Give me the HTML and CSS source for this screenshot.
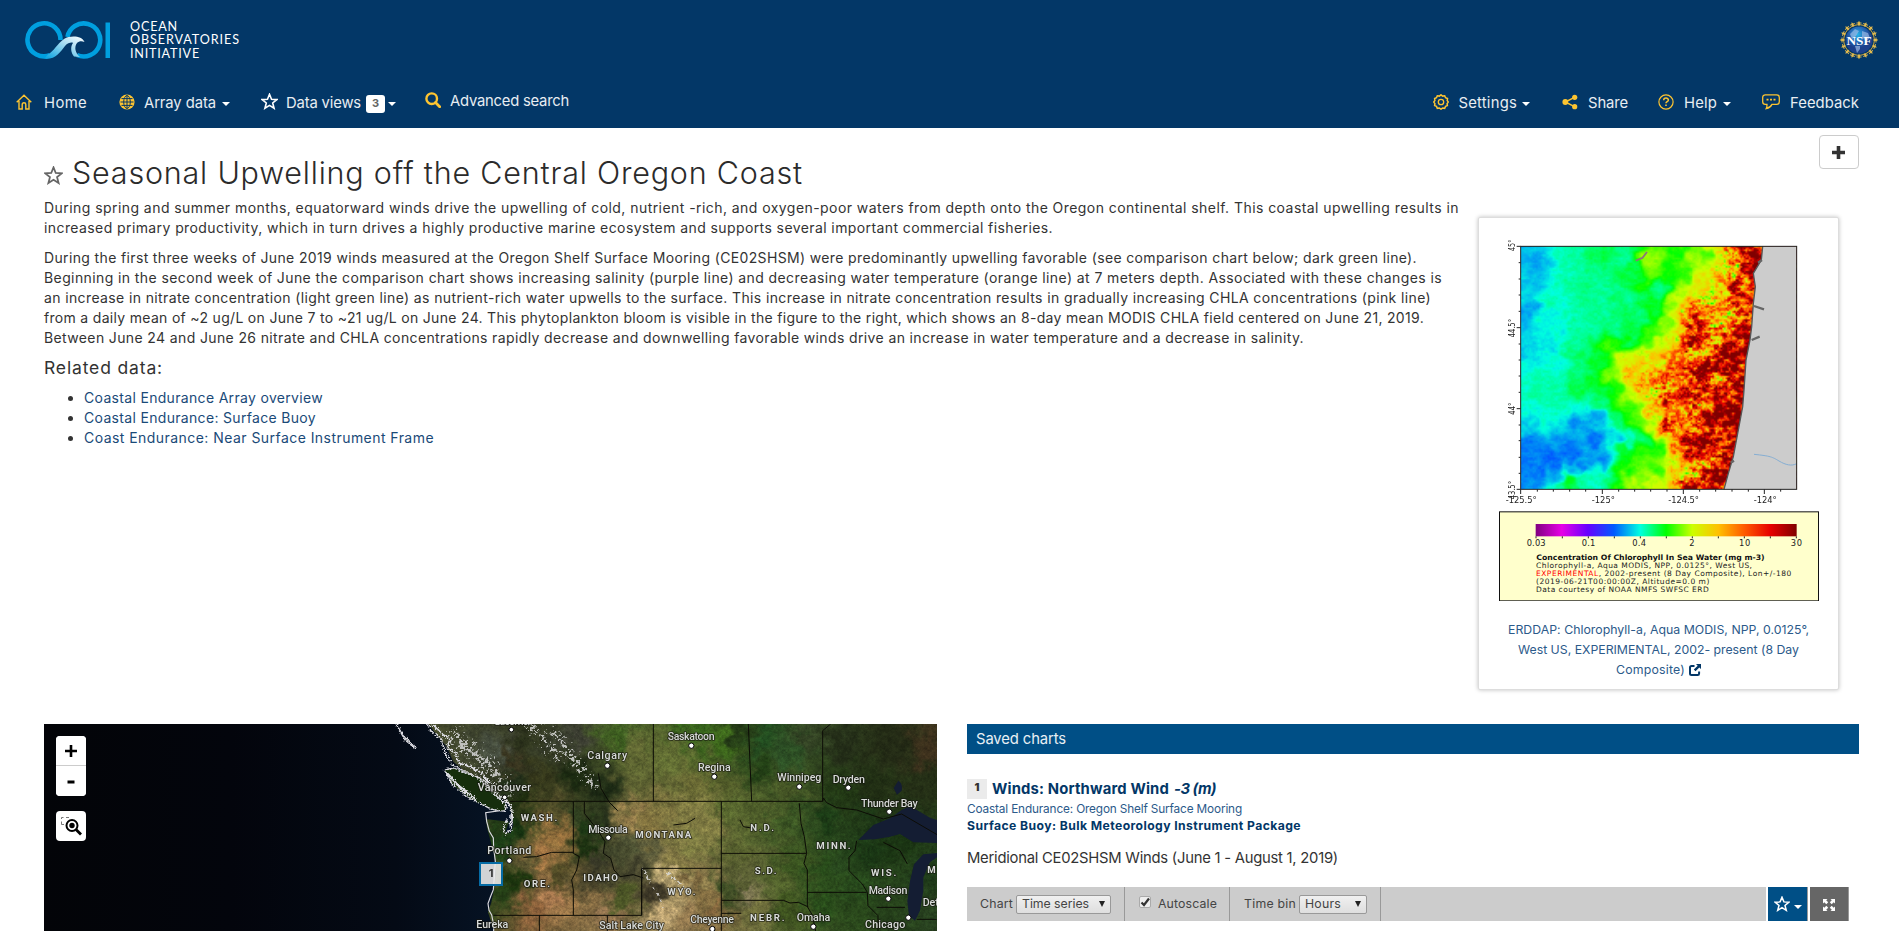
FILE: index.html
```html
<!DOCTYPE html>
<html lang="en">
<head>
<meta charset="utf-8">
<title>Seasonal Upwelling off the Central Oregon Coast</title>
<link rel="stylesheet" href="styles.css">
</head>
<body>
<svg class="defs" width="0" height="0">
  <symbol id="star" viewBox="0 0 16 16"><path d="M8 1.2l1.9 4.7 5 .3-3.9 3.2 1.3 4.9L8 11.6l-4.3 2.7L5 9.4 1.1 6.2l5-.3z" fill="none" stroke="currentColor" stroke-width="1.5"/></symbol>
</svg>

<header class="header">
  <div class="brand">
    <div class="brand-left">
      <svg class="ooi" width="87" height="40" viewBox="24 20 87 40">
        <defs><linearGradient id="wave" x1="0" x2="1" y1="1" y2="0"><stop offset="0" stop-color="#009fdf"/><stop offset=".6" stop-color="#a9dcf1"/><stop offset="1" stop-color="#fff"/></linearGradient></defs>
        <path d="M60.500 40A16.500 16.500 0 1 0 50 55.200" fill="none" stroke="#009fdf" stroke-width="4.600"/>
        <path d="M67.500 37A16.500 16.500 0 1 1 77 55" fill="none" stroke="#009fdf" stroke-width="4.600"/>
        <path d="M44 58.800C56 60 60 52 65 46c3-3.500 7-4 8-3-3 4-2 10 1 13.500l6 .5c-5-4-6-10-3-14 2-2 5-2 7.500-1C82 36 71 35 64 39c-7 5-10 12-16 15.500z" fill="url(#wave)"/>
        <path d="M105.500 22.500h4.500v35.500h-4.500z" fill="#009fdf"/>
      </svg>
      <div class="brand-name"><span data-w="48">OCEAN</span><span data-w="110">OBSERVATORIES</span><span data-w="70">INITIATIVE</span></div>
    </div>
    <svg class="nsf" width="40" height="40" viewBox="-20 -20 40 40">
      <defs><radialGradient id="globe" cx=".45" cy=".3"><stop offset="0" stop-color="#25b4ea"/><stop offset=".55" stop-color="#2468b5"/><stop offset="1" stop-color="#1c3f8a"/></radialGradient></defs>
      <circle r="15.500" fill="none" stroke="#d1a73c" stroke-width="1"/>
      <g id="nsf-rays" fill="#e0b94f"></g>
      <circle r="13.500" fill="url(#globe)"/>
      <path d="M-9-6l5-5 4 2-3 5-4 3zM3-9l6 2 2 5-4 3-4-4zM-4 6l5 0 0 3-3 4z" fill="#9bb9e4" opacity=".7"/>
      <text y="4.500" text-anchor="middle" textLength="25" lengthAdjust="spacingAndGlyphs" class="nsf-text">NSF</text>
    </svg>
  </div>
  <nav class="nav">
    <div class="nav-side">
      <a class="item home"><svg width="16" height="16" viewBox="0 0 16 16"><path d="M.7 8.300L8 1.300l7.300 7M3 7v8h3.200v-4.500a1.800 1.800 0 0 1 3.600 0V15H13V7" fill="none" stroke="#fdc431" stroke-width="1.400"/></svg><span data-w="43">Home</span></a>
      <a class="item array"><svg width="16" height="16" viewBox="0 0 16 16"><circle cx="8" cy="8" r="7.600" fill="#fdc431"/><g fill="none" stroke="#033767" stroke-width="1"><ellipse cx="8" cy="8" rx="3.300" ry="6.400"/><path d="M1.500 8h13M8 1.300v13.400M2.500 4.600h11M2.500 11.400h11"/></g></svg><span data-w="72">Array data</span><i class="caret"></i></a>
      <a class="item views"><svg width="17" height="17"><use href="#star"/></svg><span data-w="75">Data views</span><b class="count">3</b><i class="caret"></i></a>
      <a class="item search"><svg width="16" height="16" viewBox="0 0 16 16"><circle cx="6.700" cy="6.700" r="5.300" fill="none" stroke="#fdc431" stroke-width="2.400"/><path d="M10.500 10.500l4.200 4.200" stroke="#fdc431" stroke-width="2.800" stroke-linecap="round"/></svg><span data-w="119">Advanced search</span></a>
    </div>
    <div class="nav-side">
      <a class="item"><svg width="16" height="16" viewBox="0 0 16 16"><path d="M8 .8l1.700 1.300 2-.3.800 1.900 2 .8-.3 2L15.300 8l-1.200 1.600.3 2-1.900.8-.8 1.900-2-.3L8 15.200 6.300 14l-2 .3-.8-1.900-1.900-.8.3-2L.7 8l1.200-1.500-.3-2 1.900-.8.8-1.900 2 .3z" fill="none" stroke="#fdc431" stroke-width="1.500"/><circle cx="8" cy="8" r="2.700" fill="none" stroke="#fdc431" stroke-width="1.300"/></svg><span data-w="58.500">Settings</span><i class="caret"></i></a>
      <a class="item share"><svg width="16" height="16" viewBox="0 0 16 16"><g fill="#fdc431"><circle cx="3.300" cy="8" r="2.900"/><circle cx="12.700" cy="3.300" r="2.600"/><circle cx="12.700" cy="12.700" r="2.600"/></g><path d="M12.500 3.300L3.300 8l9.200 4.700" fill="none" stroke="#fdc431" stroke-width="1.500"/></svg><span data-w="40">Share</span></a>
      <a class="item help"><svg width="16" height="16" viewBox="0 0 16 16"><circle cx="8" cy="8" r="7.100" fill="none" stroke="#fdc431" stroke-width="1.200"/><path d="M5.700 6.200C5.700 3.300 10.400 3.400 10.400 6c0 1.700-2.400 1.700-2.400 3.300" fill="none" stroke="#fdc431" stroke-width="1.500"/><path d="M7.200 10.500h1.600v1.500H7.200z" fill="#fdc431"/></svg><span data-w="33">Help</span><i class="caret"></i></a>
      <a class="item feedback"><svg width="18" height="16" viewBox="0 0 18 16"><path d="M3.300.8h11.400a2.600 2.600 0 0 1 2.600 2.600v4.400a2.600 2.600 0 0 1-2.600 2.600H10c-1 2-3 3.600-5.800 4.200.7-1.300.9-2.500.8-4.200H3.300A2.600 2.600 0 0 1 .7 7.800V3.400A2.600 2.600 0 0 1 3.300.8z" fill="none" stroke="#fdc431" stroke-width="1.300"/><path d="M4.500 4.800h2v1.700h-2zM8 4.800h2v1.700H8zM11.500 4.800h2v1.700h-2z" fill="#fdc431"/></svg><span data-w="69">Feedback</span></a>
    </div>
  </nav>
</header>

<div class="actions"><button class="add" aria-label="Add"><svg width="13" height="13" viewBox="0 0 13 13"><path d="M4.700 0h3.600v4.700H13v3.600H8.300V13H4.700V8.300H0V4.700h4.700z" fill="#333"/></svg></button></div>

<main class="page">
  <section class="intro">
    <article class="story">
      <h1><svg width="19" height="19"><use href="#star"/></svg><span data-w="731">Seasonal Upwelling off the Central Oregon Coast</span></h1>
      <p><span data-w="1415">During spring and summer months, equatorward winds drive the upwelling of cold, nutrient -rich, and oxygen-poor waters from depth onto the Oregon continental shelf. This coastal upwelling results in</span><span data-w="1009">increased primary productivity, which in turn drives a highly productive marine ecosystem and supports several important commercial fisheries.</span></p>
      <p><span data-w="1373">During the first three weeks of June 2019 winds measured at the Oregon Shelf Surface Mooring (CE02SHSM) were predominantly upwelling favorable (see comparison chart below; dark green line).</span><span data-w="1398">Beginning in the second week of June the comparison chart shows increasing salinity (purple line) and decreasing water temperature (orange line) at 7 meters depth. Associated with these changes is</span><span data-w="1387">an increase in nitrate concentration (light green line) as nutrient-rich water upwells to the surface. This increase in nitrate concentration results in gradually increasing CHLA concentrations (pink line)</span><span data-w="1380">from a daily mean of ~2 ug/L on June 7 to ~21 ug/L on June 24. This phytoplankton bloom is visible in the figure to the right, which shows an 8-day mean MODIS CHLA field centered on June 21, 2019.</span><span data-w="1260">Between June 24 and June 26 nitrate and CHLA concentrations rapidly decrease and downwelling favorable winds drive an increase in water temperature and a decrease in salinity.</span></p>
      <h2><span data-w="119">Related data:</span></h2>
      <ul>
        <li><a data-w="239">Coastal Endurance Array overview</a></li>
        <li><a data-w="232">Coastal Endurance: Surface Buoy</a></li>
        <li><a data-w="350">Coast Endurance: Near Surface Instrument Frame</a></li>
      </ul>
    </article>

    <figure class="card">
      <div class="plot">
        <canvas id="chlorophyll" width="166" height="146"></canvas>
        <svg class="plot-axes" width="360" height="390" viewBox="27 24 1080 1170">
          <path d="M878 109L874 150L850 190L856 230L850 280L845 350L840 390L828 450L822 540L818 590L805 660L790 740L775 790L762 838H980V109z" fill="#ccc"/>
          <path d="M878 109L874 150L850 190L856 230L850 280L845 350L840 390L828 450L822 540L818 590L805 660L790 740L775 790L762 838" fill="none" stroke="#555" stroke-width="4"/>
          <path d="M852 288l30 10M845 390l24-10M864 158l12-8M782 758l10-6" stroke="#666" stroke-width="7"/>
          <path d="M852 733c50 5 55 8 75 20s38 16 53 8" fill="none" stroke="#85aed3" stroke-width="3"/>
          <path d="M497 152l20-8 14-18" fill="none" stroke="#887a78" stroke-width="6"/>
          <rect x="152" y="109" width="828" height="729" fill="none" stroke="#222" stroke-width="3"/>
          <path d="M140 109h12M140 353h12M140 596h12M140 838h12M146 158h6M146 207h6M146 255h6M146 304h6M146 402h6M146 450h6M146 498h6M146 547h6M146 645h6M146 692h6M146 742h6M146 790h6M152 838v14M397 838v14M640 838v14M883 838v14M202 838v7M250 838v7M299 838v7M347 838v7M446 838v7M494 838v7M542 838v7M591 838v7M689 838v7M737 838v7M786 838v7M835 838v7M932 838v7" stroke="#222" stroke-width="3"/>
          <g class="tick">
            <text x="107" y="879" textLength="93">-125.5°</text><text x="365" y="879" textLength="70">-125°</text><text x="595" y="879" textLength="92">-124.5°</text><text x="851" y="879" textLength="69">-124°</text>
            <text transform="translate(134 123) rotate(-90)" textLength="34" lengthAdjust="spacingAndGlyphs">45°</text><text transform="translate(134 382) rotate(-90)" textLength="55" lengthAdjust="spacingAndGlyphs">44.5°</text><text transform="translate(134 614) rotate(-90)" textLength="36" lengthAdjust="spacingAndGlyphs">44°</text><text transform="translate(134 868) rotate(-90)" textLength="55" lengthAdjust="spacingAndGlyphs">43.5°</text>
          </g>
          <defs><linearGradient id="scale"><stop offset="0" stop-color="#800080"/><stop offset=".1" stop-color="#e600e6"/><stop offset=".2" stop-color="#6600ff"/><stop offset=".3" stop-color="#005aff"/><stop offset=".4" stop-color="#00ffe0"/><stop offset=".5" stop-color="#0f0"/><stop offset=".6" stop-color="#cf0"/><stop offset=".7" stop-color="#ffc000"/><stop offset=".8" stop-color="#ff5a00"/><stop offset=".9" stop-color="#e60000"/><stop offset="1" stop-color="#800000"/></linearGradient></defs>
          <rect x="88.500" y="905.500" width="957" height="267" fill="#ffc" stroke="#111" stroke-width="3"/>
          <rect x="197" y="942" width="783" height="37" fill="url(#scale)"/>
          <path d="M198 979v6M277 979v6M355 979v6M433 979v6M511 979v6M589 979v6M667 979v6M745 979v6M823 979v6M901 979v6M979 979v6" stroke="#222" stroke-width="3"/>
          <g class="tick"><text x="170" y="1009" textLength="57">0.03</text><text x="335" y="1009" textLength="41">0.1</text><text x="487" y="1009" textLength="41">0.4</text><text x="658" y="1009">2</text><text x="807" y="1009" textLength="34">10</text><text x="962" y="1009" textLength="34">30</text></g>
          <g class="legend">
            <text class="legend-title" x="199" y="1050" textLength="685" lengthAdjust="spacingAndGlyphs">Concentration Of Chlorophyll In Sea Water (mg m-3)</text>
            <text x="198" y="1074" textLength="648">Chlorophyll-a, Aqua MODIS, NPP, 0.0125°, West US,</text>
            <text x="198" y="1098" textLength="766"><tspan fill="#f00">EXPERIMENTAL</tspan>, 2002-present (8 Day Composite), Lon+/-180</text>
            <text x="198" y="1122" textLength="520">(2019-06-21T00:00:00Z, Altitude=0.0 m)</text>
            <text x="198" y="1146" textLength="518">Data courtesy of NOAA NMFS SWFSC ERD</text>
          </g>
        </svg>
      </div>
      <figcaption><span data-w="301">ERDDAP: Chlorophyll-a, Aqua MODIS, NPP, 0.0125°,</span><span data-w="281">West US, EXPERIMENTAL, 2002- present (8 Day</span><span class="last"><span data-w="69">Composite)</span><svg width="12" height="12" viewBox="0 0 12 12"><path d="M5.500 2H2.500Q1 2 1 3.500v6Q1 11 2.500 11h6.200q1.400 0 1.400-1.500V7.500" fill="none" stroke="#033767" stroke-width="2"/><path d="M7 0h5v5L10.300 3.500 6.500 7.300 4.800 5.600l3.900-3.900z" fill="#033767"/></svg></span></figcaption>
    </figure>
  </section>

  <section class="panels">
    <div class="map">
      <canvas id="terrain" width="893" height="207"></canvas>
      <svg class="map-lines" width="893" height="207" viewBox="0 0 893 207">
        <defs>
          <linearGradient id="sea"><stop offset="0" stop-color="#030408"/><stop offset=".4" stop-color="#03050c"/><stop offset=".75" stop-color="#040a15"/><stop offset="1" stop-color="#061426"/></linearGradient>
          <filter id="rough" x="-10%" y="-10%" width="120%" height="120%"><feTurbulence type="fractalNoise" baseFrequency=".2" numOctaves="3" seed="4"/><feDisplacementMap in="SourceGraphic" scale="14" xChannelSelector="R" yChannelSelector="G"/></filter>
        </defs>
        <g transform="translate(341 -4) scale(.33333)">
          <path d="M-1030 0H120l40 50 25 30 20 45 35 30 55 30 35 40 45 30 4 30 6 30-8 25-15-5 10-30-70-8 5 30 12 45 10 35 4 50-6 50-8 40-10 30 17 50 3 40H-1030z" fill="url(#sea)"/>
          <g filter="url(#rough)" fill="none" stroke="#dddde3" stroke-width="4" stroke-linejoin="round">
            <path d="M120 0l20 35 28 20 15 50 20 30 35 18 55 25 30 30 35 30 20 20 5 30-5 40-18 15-5-20 12-25"/>
            <path d="M135 5l40 40 20 10-8 30 25 15 10 30 35 10 35 20 15 25 20 5M360 230l20 40-4 50" stroke-width="5"/>
            <path d="M30 5l20 35 20 20 20 24-30-24-25-45z" fill="#888"/>
            <path d="M178 150l28-6 76 30 40 42 42 40-4 18-40-6-70-36-46-36z" fill="#182e0e"/>
            <path d="M185 158l36 40 50 38" stroke-width="7"/>
          </g>
          <path d="M345 272l-43 6 3 26 8 30 12 20 1 30 5 40-3 45-3 40-8 20-8 22 3 20 8 14 6 30v20" fill="none" stroke="#d8d8de" stroke-width="3.500"/>
        </g>
        <g transform="translate(446 -14) scale(.33333)">
          <g fill="#141d33"><path d="M1105 390l45-45 50-20 35-25 25-12 60 35 30 10v66l-80-2-40-25-30 8-45 8zM1350 428l-50 5-28 30-12 50-8 60 5 45 18 14 15-30 10-60v-40l20-45 30-22zM1225 212q14 8 10 30l-14 12-10-20z"/></g>
          <g class="borders">
            <path d="M490 42v232M775 42l10 232M1022 42l-24 20v212M60 274H998l2-10 10 14 30 15 60 7 80 27 55-15 120 70M250 274v156l18 10-8 40-15 30 5 30v76M10 616h445V475h239M100 442l40-2 45-13h65M283 274v36l40 50 22 35-5 35 22 15 10 35 18 20 40-6 30 10M455 475v141M694 274v389M694 430h256M694 571h186l20 8 25-2 30 14M928 280l5 60 10 40 7 50-8 30 10 20v110l15 25 10 48M952 547h178M1100 392l-5 30-18 20v40l40 40 15 25 2 40 30 30v46M1160 592h85M148 616v50M352 616v50M325 190l8 45 25 42 25 25M1180 397l50 25 22 40M694 610h60M1280 628h60M550 345l40-5 25-15M750 330l10 20 30 5"/>
          </g>
          <g fill="#fff" stroke="#000" stroke-width="3"><circle cx="64" cy="59" r="7"/><circle cx="352" cy="167" r="8"/><circle cx="604" cy="107" r="8"/><circle cx="673" cy="200" r="8"/><circle cx="928" cy="230" r="8"/><circle cx="1075" cy="233" r="8"/><circle cx="1198" cy="305" r="8"/><circle cx="355" cy="383" r="8"/><circle cx="58" cy="452" r="8"/><circle cx="1195" cy="566" r="8"/><circle cx="1255" cy="623" r="8"/><circle cx="970" cy="650" r="8"/><circle cx="667" cy="657" r="8"/><circle cx="44" cy="262" r="7"/></g>
          <g class="city">
            <text x="14" y="46" textLength="110">Lacomer</text><text x="292" y="147" textLength="120">Calgary</text><text x="533" y="91" textLength="141">Saskatoon</text><text x="624" y="182" textLength="98">Regina</text><text x="862" y="213" textLength="132">Winnipeg</text><text x="1028" y="218" textLength="97">Dryden</text><text x="1113" y="290" textLength="170">Thunder Bay</text><text x="-37" y="243" textLength="160">Vancouver</text><text x="295" y="368" textLength="118">Missoula</text><text x="-8" y="431" textLength="132">Portland</text><text x="1136" y="551" textLength="116">Madison</text><text x="1125" y="654" textLength="121">Chicago</text><text x="920" y="634" textLength="101">Omaha</text><text x="601" y="640" textLength="131">Cheyenne</text><text x="328" y="656" textLength="194">Salt Lake City</text><text x="-41" y="655" textLength="96">Eureka</text><text x="1298" y="588">Det</text>
          </g>
          <g class="state">
            <text x="92" y="334" textLength="110">WASH.</text><text x="436" y="383" textLength="168">MONTANA</text><text x="781" y="364" textLength="71">N.D.</text><text x="979" y="418" textLength="103">MINN.</text><text x="794" y="492" textLength="66">S.D.</text><text x="1143" y="498" textLength="76">WIS.</text><text x="1312" y="488">M</text><text x="101" y="531" textLength="79">ORE.</text><text x="280" y="513" textLength="104">IDAHO</text><text x="532" y="554" textLength="85">WYO.</text><text x="780" y="632" textLength="104">NEBR.</text>
          </g>
        </g>
      </svg>
      <div class="map-tools">
        <div class="zoom"><button aria-label="Zoom in"><svg width="12" height="12" viewBox="0 0 12 12"><path d="M6 0v12M0 6h12" stroke="#000" stroke-width="2.600"/></svg></button><button aria-label="Zoom out"><svg width="12" height="12" viewBox="0 0 12 12"><path d="M2.500 7h7" stroke="#000" stroke-width="3.200"/></svg></button></div>
        <button class="box-zoom" aria-label="Zoom to area"><svg width="22" height="22" viewBox="0 0 22 22"><path d="M1.500 4V2.500h2M6 2.500h3M1.500 6.500V9.500H4M6 9.500h1" fill="none" stroke="#777"/><circle cx="12" cy="10.500" r="5.500" fill="none" stroke="#000" stroke-width="2"/><circle cx="12" cy="10.500" r="2.700"/><path d="M16 14.500l5 5" stroke="#000" stroke-width="2.800"/></svg></button>
      </div>
      <div class="marker">1</div>
    </div>

    <div class="charts">
      <h3 class="bar"><span data-w="90">Saved charts</span></h3>
      <div class="chart-title"><b class="num">1</b><span data-w="177">Winds: Northward Wind</span><em data-w="42">-3 (m)</em></div>
      <div class="site"><span data-w="275">Coastal Endurance: Oregon Shelf Surface Mooring</span></div>
      <div class="instrument"><span data-w="334">Surface Buoy: Bulk Meteorology Instrument Package</span></div>
      <div class="summary"><span data-w="371">Meridional CE02SHSM Winds (June 1 - August 1, 2019)</span></div>
      <div class="toolbar">
        <div class="controls">
          <label class="cell c1"><span data-w="33">Chart</span><span class="select s1"><span data-w="67">Time series</span><i></i></span></label>
          <label class="cell c2"><span class="check"><svg width="10" height="10" viewBox="0 0 10 10"><path d="M1.500 5.500L4 8 9 1.500" fill="none" stroke="#333" stroke-width="2.200"/></svg></span><span data-w="59">Autoscale</span></label>
          <label class="cell c3"><span data-w="52">Time bin</span><span class="select s2"><span data-w="36">Hours</span><i></i></span></label>
        </div>
        <button class="fav" aria-label="Favorite"><svg width="16" height="16"><use href="#star"/></svg><i class="caret"></i></button>
        <button class="expand" aria-label="Full screen"><svg width="14" height="14" viewBox="0 0 14 14"><path d="M1 1h4.500L4.200 2.300l2 2-1.900 1.900-2-2L1 5.500zM13 1v4.500l-1.300-1.300-2 2-1.900-1.900 2-2L8.500 1zM1 13V8.500l1.300 1.300 2-2 1.900 1.900-2 2L5.500 13zM13 13H8.500l1.300-1.300-2-2 1.900-1.900 2 2L13 8.500z" fill="#fff"/></svg></button>
      </div>
    </div>
  </section>
</main>
<script src="page.js"></script>
</body>
</html>
```

FILE: styles.css
```css
* { box-sizing: border-box; }
html, body { height: 100%; }
body { margin: 0; overflow: hidden; background: #fff; color: #333; font: 14px/20px Inter, "Open Sans", sans-serif; }
.defs { position: absolute; }
svg { display: block; flex: none; }
button { padding: 0; border: 0; font: inherit; display: flex; align-items: center; justify-content: center; }
[data-w] { display: block; width: max-content; white-space: nowrap; }

.header { height: 128px; background: #033767; color: #fff; }
.brand { height: 80px; padding: 0 20px 0 24px; display: flex; align-items: center; justify-content: space-between; }
.brand-left { display: flex; gap: 19px; align-items: center; }
.brand-name { font: 12.6px/13.5px Lato, sans-serif; color: #fff; }
.nsf-text { font: bold 13px "Liberation Serif", serif; fill: #fff; }
.nav { height: 48px; padding: 0 40px 0 16px; display: flex; justify-content: space-between; font-size: 14.8px; font-weight: 400; color: #e8edf2; }
.nav-side { display: flex; }
.item { display: flex; height: 26px; margin-top: 10px; align-items: center; }
.item svg { margin-top: -3px; }
.item > span { margin-left: 10px; }
.caret { width: 8px; height: 0; margin: 2px 0 0 5px; border: 4px solid transparent; border-top-color: #fff; border-bottom: 0; }
.home > span { margin-left: 12px; }
.array { margin-left: 32px; }
.array > span { margin-left: 9px; }
.array .caret { margin-left: 6px; }
.views { margin-left: 31px; color: #fff; }
.views > span { margin-left: 8px; color: #e8edf2; }
.count { width: 19px; height: 18px; margin: 2px 0 0 5px; border-radius: 3px; background: #fff; color: #666; font-size: 11px; line-height: 17px; text-align: center; }
.views .caret { margin-left: 3px; }
.search { margin: 8px 0 0 29px; }
.search > span { margin-left: 9px; }
.share { margin-left: 32px; }
.help { margin-left: 30px; }
.help .caret { margin-left: 6px; }
.feedback { margin-left: 31px; }

.actions { height: 43px; padding: 7px 40px 0 0; display: flex; justify-content: flex-end; }
.add { width: 40px; height: 34px; padding-right: 2px; background: #fff; border: 1px solid #ccc; border-radius: 4px; }

.page { padding: 0 40px 0 44px; }
.intro { height: 553px; display: flex; justify-content: space-between; }
h1 { height: 28px; margin: -13px 0 0; display: flex; align-items: center; gap: 9px; font-size: 30.5px; line-height: 33px; font-weight: 300; color: #2b2b2b; }
h1 svg { margin-top: 6px; color: #666; }
h1 + p { margin-top: 12px; }
p { margin: 0 0 10px; }
h2 { margin: 9px 0 10px; font-size: 17.5px; line-height: 20px; font-weight: 400; }
ul { margin: 0; padding-left: 40px; }
li a { color: #1a4a78; }
.card { width: 361px; height: 473px; margin: 46px 20px 0 0; background: #fff; border: 1px solid #ddd; border-radius: 2px; box-shadow: 0 0 4px rgba(0,0,0,.25); }
.plot { position: relative; height: 390px; padding: 28px 0 0 42px; }
.plot canvas { display: block; width: 276px; height: 243px; }
.plot-axes { position: absolute; left: 0; top: 0; }
.tick { font: 25px "DejaVu Sans", sans-serif; fill: #222; }
.legend { font: 22.5px "DejaVu Sans", sans-serif; fill: #222; }
.legend-title { font-weight: bold; fill: #111; }
figcaption { margin-top: 12px; display: flex; flex-direction: column; align-items: center; font-size: 12.3px; color: #2c5a8a; }
.last { display: flex; gap: 4px; align-items: center; }

.panels { display: grid; grid-template-columns: 893px 892px; column-gap: 30px; }
.map { position: relative; height: 207px; overflow: hidden; background: #03050c; }
.map canvas { display: block; }
.map-lines { position: absolute; left: 0; top: 0; }
.borders { fill: none; stroke: #0c0c06; stroke-width: 3; }
.city, .state { fill: #d8dbd8; stroke: rgba(20,20,15,.75); stroke-width: 5; stroke-linejoin: round; paint-order: stroke; }
.city { font: 500 32px Roboto, sans-serif; }
.state { font: 700 29px Roboto, sans-serif; }
.map-tools { position: absolute; left: 12px; top: 12px; width: 30px; display: grid; gap: 15px; }
.zoom { border-radius: 4px; background: #fff; overflow: hidden; }
.zoom button { width: 30px; height: 30px; background: #fff; }
.zoom button:first-child { border-bottom: 1px solid #ccc; }
.box-zoom { width: 30px; height: 30px; border-radius: 4px; background: #fff; }
.marker { position: absolute; left: 435px; top: 138px; width: 24px; height: 24px; border: 2px solid #066ca5; background: rgba(238,238,238,.88); font-size: 11px; font-weight: 700; text-align: center; line-height: 19px; }

.bar { height: 30px; margin: 0; padding: 0 10px 0 9px; background: #004f86; color: #e9eff4; font-size: 14.8px; font-weight: 400; line-height: 30px; }
.chart-title { margin-top: 25px; height: 20px; display: flex; color: #033767; font-size: 14.8px; font-weight: 700; }
.chart-title em { margin-left: 5px; }
.num { width: 20px; height: 20px; margin-right: 5px; background: #ebebeb; color: #333; font-size: 11px; line-height: 17px; text-align: center; }
.site { color: #2c5a8a; font-size: 11.8px; line-height: 20px; }
.instrument { color: #033767; font-size: 12.2px; font-weight: 700; line-height: 14px; }
.summary { margin-top: 15px; font-size: 14.8px; line-height: 20px; }
.toolbar { height: 34px; margin-top: 19px; display: flex; font-size: 12.3px; color: #444; }
.controls { flex: 0 0 799px; display: flex; background: #ccc; }
.cell { display: flex; align-items: center; border-right: 1px solid #999; }
.c1 { width: 158px; padding-left: 13px; }
.c2 { width: 105px; padding-left: 14px; }
.c3 { width: 151px; padding-left: 14px; }
.select { height: 19px; margin-left: 3px; padding-left: 5px; display: flex; align-items: center; justify-content: space-between; border: 1px solid #999; border-radius: 2px; background: linear-gradient(#f0f0f0, #dedede); }
.select i { margin-right: 5px; border: 3px solid transparent; border-top: 6px solid #222; border-bottom: 0; }
.s1 { width: 95px; }
.s2 { width: 68px; }
.check { width: 12px; height: 12px; margin: -5px 7px 0 0; border: 1px solid #aaa; border-radius: 2px; background: #eee; }
.fav { width: 40px; margin-left: 2px; background: #004f86; border-right: 1px solid #999; color: #fff; }
.fav .caret { margin: 5px 0 0 4px; }
.expand { width: 39px; margin-left: 2px; padding-top: 2px; background: #666; border-right: 1px solid #999; }
```

FILE: page.js
```js
// Spread each label over its set measure.
document.querySelectorAll('[data-w]').forEach(function (el) {
  var gap = (el.dataset.w - el.getBoundingClientRect().width) / el.textContent.length;
  el.style.letterSpacing = gap.toFixed(4) + 'px';
});

// Figures round the seal.
(function () {
  var out = '';
  for (var a = 0; a < 360; a += 22.5) {
    out += '<path transform="rotate(' + a + ')" d="M-1-14.500v-2h-1.500v-1h1.500l1-1.800 1 1.800h1.500v1H1v2z"/>';
  }
  document.getElementById('nsf-rays').innerHTML = out;
})();

function hash(x, y) {
  var n = Math.imul(x, 374761393) + Math.imul(y, 668265263);
  n = Math.imul(n ^ (n >>> 13), 1274126177);
  return ((n ^ (n >>> 16)) >>> 0) / 4294967296;
}
function noise(x, y) {
  var i = Math.floor(x), j = Math.floor(y), u = x - i, v = y - j;
  u = u * u * (3 - 2 * u); v = v * v * (3 - 2 * v);
  return (hash(i, j) * (1 - u) + hash(i + 1, j) * u) * (1 - v) + (hash(i, j + 1) * (1 - u) + hash(i + 1, j + 1) * u) * v;
}
// Inverse-distance blend of samples [x, y, ...values].
function blend(samples, x, y, power) {
  var k = samples[0].length - 2, out = new Array(k).fill(0), total = 0;
  samples.forEach(function (s) {
    var w = 1 / Math.pow((s[0] - x) * (s[0] - x) + (s[1] - y) * (s[1] - y) + 60, power);
    total += w;
    for (var c = 0; c < k; c++) out[c] += w * s[c + 2];
  });
  return out.map(function (v) { return v / total; });
}
function paint(id, pixel) {
  var canvas = document.getElementById(id), ctx = canvas.getContext('2d');
  var img = ctx.createImageData(canvas.width, canvas.height), p = 0;
  for (var y = 0; y < canvas.height; y++) for (var x = 0; x < canvas.width; x++) {
    var c = pixel(x, y);
    img.data[p++] = c[0]; img.data[p++] = c[1]; img.data[p++] = c[2]; img.data[p++] = 255;
  }
  ctx.putImageData(img, 0, 0);
}

var scale = [[128,0,128],[230,0,230],[102,0,255],[0,90,255],[0,255,224],[0,255,0],[204,255,0],[255,192,0],[255,90,0],[230,0,0],[128,0,0]];
var field = [[160,120,.36],[200,160,.35],[200,220,.36],[240,260,.41],[300,150,.42],[300,220,.43],[400,200,.43],[400,250,.43],[480,260,.44],[420,120,.47],[460,140,.44],[540,150,.57],[540,190,.55],[480,200,.47],[620,130,.51],[700,130,.54],[600,190,.5],[570,240,.44],[650,180,.53],[680,150,.58],[740,120,.63],[700,200,.62],[780,130,.8],[820,130,.93],[860,120,1],[840,180,.95],[780,180,.76],[750,230,.7],[800,250,.85],[640,250,.58],[600,280,.56],[560,300,.47],[620,310,.62],[660,290,.8],[700,290,.74],[690,350,.9],[740,330,.72],[790,330,.78],[840,280,.75],[220,320,.4],[170,310,.34],[300,300,.42],[350,350,.43],[400,300,.43],[500,320,.45],[430,350,.44],[480,380,.47],[580,340,.57],[540,380,.53],[440,400,.52],[450,440,.62],[520,430,.64],[600,390,.65],[650,410,.82],[620,450,.7],[680,430,.75],[740,380,.8],[800,400,.9],[820,430,1],[180,400,.37],[230,400,.38],[330,400,.43],[260,460,.4],[320,460,.45],[380,460,.48],[420,490,.56],[330,540,.47],[210,540,.42],[260,560,.42],[170,580,.4],[300,600,.41],[400,580,.45],[430,540,.51],[470,490,.65],[530,500,.7],[600,500,.75],[700,480,.9],[780,480,.95],[810,520,1],[480,560,.6],[540,600,.67],[590,550,.8],[620,600,.7],[620,660,.72],[590,640,.82],[680,560,.82],[740,560,.8],[800,580,1],[690,640,.97],[760,620,.92],[800,640,1],[500,620,.54],[470,600,.52],[440,620,.45],[380,620,.35],[320,640,.33],[380,680,.32],[430,680,.37],[220,630,.41],[160,640,.37],[170,700,.32],[220,730,.31],[260,760,.31],[200,800,.32],[160,780,.32],[300,720,.31],[340,770,.32],[390,750,.33],[400,790,.42],[290,820,.5],[340,800,.43],[480,680,.42],[530,690,.45],[570,720,.5],[500,750,.54],[470,730,.49],[550,770,.53],[440,780,.5],[480,810,.58],[540,820,.6],[600,790,.62],[590,740,.6],[620,720,.7],[630,780,.68],[660,700,.8],[700,700,.95],[690,760,.8],[720,820,.95],[750,720,.92],[770,760,1],[750,810,1],[660,820,.85]];
paint('chlorophyll', function (px, py) {
  var x = 152 + px * 5, y = 108 + py * 5;
  var v = blend(field, x + (noise(px / 5, py / 5 + 70) - .5) * 36, y + (noise(px / 5 + 40, py / 5) - .5) * 36, 1.7)[0];
  var n = (noise(px / 2.6, py / 1.7) - .5) * .75 + (noise(px / 9, py / 8 + 30) - .5) * .5 + (hash(px, py) - .5) * .35;
  var rough = Math.max(0, Math.min(1, (v - .6) / .18));
  v += n * (.035 + rough * .5) + rough * .01;
  v = Math.max(.27, Math.min(1, v));
  var t = v * 10, i = Math.min(9, Math.floor(t)), f = t - i;
  return scale[i].map(function (c, k) { return c + (scale[i + 1][k] - c) * f; });
});

var land = [[380,80,58,90,30],[450,120,92,98,48],[440,220,85,90,45],[400,60,68,95,38],[540,150,92,103,48],[620,60,52,95,26],[700,80,58,98,26],[620,230,98,98,48],[700,230,80,90,40],[740,60,32,52,20],[820,80,32,72,30],[820,180,32,60,20],[900,120,42,75,35],[960,80,50,65,35],[900,240,65,80,35],[1050,100,33,42,22],[1200,100,33,40,20],[1320,120,58,46,27],[1320,220,33,43,20],[1150,240,30,42,18],[1050,240,30,50,18],[250,80,60,62,50],[200,100,52,58,42],[100,100,40,46,25],[60,150,52,48,28],[20,130,70,78,65],[150,200,50,52,25],[250,200,24,38,15],[330,240,25,38,18],[60,220,32,45,25],[100,260,30,45,15],[180,300,75,72,38],[70,350,20,48,15],[30,400,25,58,20],[160,370,145,110,60],[210,380,150,110,60],[150,440,150,108,62],[100,460,85,80,45],[80,520,24,48,12],[30,540,33,58,20],[0,480,60,70,28],[150,510,130,100,60],[200,490,75,70,35],[180,570,160,115,75],[130,600,130,90,55],[230,580,150,115,70],[290,360,25,50,18],[290,420,25,45,15],[260,320,45,60,30],[340,320,35,45,25],[320,470,50,50,35],[300,520,70,65,40],[300,580,130,105,65],[400,560,70,80,35],[360,610,140,110,75],[370,430,60,65,40],[420,400,75,80,50],[430,470,60,60,40],[430,320,150,125,75],[500,310,120,110,60],[480,350,125,110,60],[600,310,125,120,65],[600,400,115,115,60],[560,450,125,115,65],[640,350,125,120,65],[460,420,85,85,55],[490,540,55,50,35],[540,500,185,165,115],[560,560,165,145,98],[600,510,120,100,60],[640,560,120,100,60],[640,510,130,115,70],[520,620,185,160,112],[600,620,140,115,75],[680,600,130,100,60],[720,300,85,100,45],[800,320,75,90,40],[880,340,60,85,35],[740,420,85,95,45],[740,500,80,85,45],[760,545,120,112,80],[710,530,50,65,30],[850,500,75,90,40],[920,460,55,80,30],[800,600,108,108,58],[900,600,60,80,30],[700,560,60,75,35],[960,340,45,73,30],[1000,340,25,55,20],[1050,440,38,68,28],[1000,480,38,72,25],[1000,580,38,72,25],[1100,520,38,72,27],[1100,600,38,66,25],[1200,620,35,60,25],[1150,350,25,50,20],[1130,420,25,53,20],[1200,480,35,62,25],[1250,370,25,50,18],[1320,500,30,58,25],[1330,620,38,62,30],[1200,400,25,50,18]];
// Snow-covered ridges: start, end, half width.
var ridges = [[-110,80,0,165,48],[0,165,55,240,36],[130,50,200,130,36],[195,70,310,225,34],[530,485,590,540,12],[455,470,520,590,7]];
function ridge(x, y) {
  return ridges.reduce(function (best, r) {
    var dx = r[2] - r[0], dy = r[3] - r[1];
    var t = Math.max(0, Math.min(1, ((x - r[0]) * dx + (y - r[1]) * dy) / (dx * dx + dy * dy)));
    return Math.max(best, 1 - Math.hypot(x - r[0] - t * dx, y - r[1] - t * dy) / r[4]);
  }, 0);
}
paint('terrain', function (px, py) {
  if (px < 370) return [3, 5, 12];
  var x = (px - 446) * 3, y = (py + 14) * 3;
  var wx = x + (noise(px / 9, py / 9) - .5) * 60 + (noise(px / 3, py / 3) - .5) * 24;
  var wy = y + (noise(px / 9 + 50, py / 9) - .5) * 60 + (noise(px / 3 + 80, py / 3) - .5) * 24;
  var c = blend(land, wx, wy, 1.5);
  var n = .06 + (noise(px / 2, py / 2) - .5) * .26 + (noise(px / 6, py / 5) - .5) * .2 + (hash(px, py) - .5) * .12;
  var s = ridge(x, y), m = 0;
  if (s > 0) m = Math.max(0, Math.min(.85, (noise(px / 1.8 + 9, py / 1.8) * .7 + hash(px, py) * .3 - .88 + s * .42) * 5));
  return c.map(function (v) { return v * (1 + n) * (1 - m) + 215 * m; });
});
```
